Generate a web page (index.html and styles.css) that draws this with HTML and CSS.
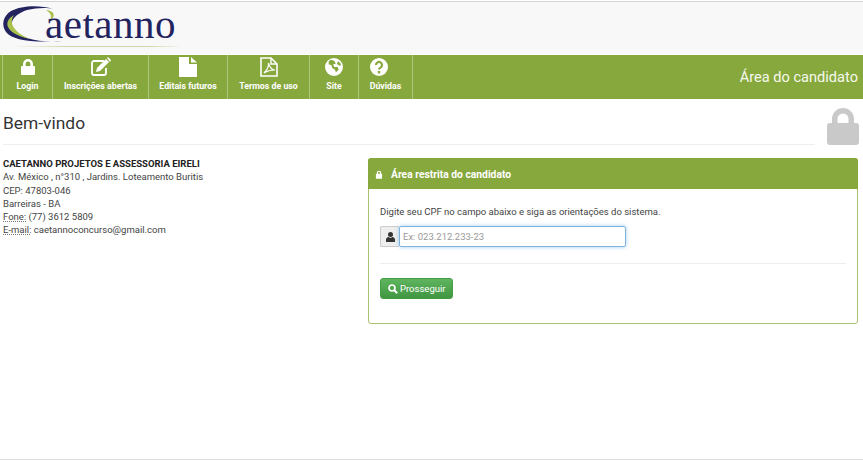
FILE: index.html
```html
<!DOCTYPE html>
<html lang="pt-BR">
<head>
  <meta charset="UTF-8">
  <title>Caetanno - Área do candidato</title>
  <link rel="stylesheet" href="styles.css">
</head>
<body>
  <header class="top">
    <div class="logo">
      <svg class="logo-c" width="64" height="40" viewBox="0 0 64 40">
        <path d="M52 4C40 0 21 0 10 6C2 11 0 20 5 27C11 35 30 38 61 36C40 38 20 34 13 25C7 17 14 9 26 5C35 3 45 2 52 4Z" fill="#23235f"/>
        <path d="M30 34C19 32 10 28 7 22C5 17 8 13 13 10C10 15 10 19 14 24C17 28 23 32 30 34Z" fill="#a9c04c"/>
        <path d="M45 5C54 6 55 11 49 16C51 11 50 8 45 5Z" fill="#a9c04c"/>
      </svg>
      <span class="logo-text">aetanno</span>
      <div class="logo-line"></div>
    </div>
  </header>

  <nav class="nav">
    <ul class="nav-list">
      <li class="nav-item w-login">
        <svg width="18" height="18" viewBox="0 0 18 18"><path d="M4 8V6a5 5 0 0 1 10 0v2h1a1 1 0 0 1 1 1v7a1 1 0 0 1-1 1H3a1 1 0 0 1-1-1V9a1 1 0 0 1 1-1Zm2.600 0h4.800V6a2.400 2.400 0 0 0-4.800 0Z" fill="#fff"/></svg>
        <span>Login</span>
      </li>
      <li class="nav-item w-insc">
        <svg width="22" height="18" viewBox="0 0 22 18"><path d="M14 3H4a2 2 0 0 0-2 2v10a2 2 0 0 0 2 2h10a2 2 0 0 0 2-2v-5" fill="none" stroke="#fff" stroke-width="1.800"/><path d="M7 10l9-9 3 3-9 9-4 1Z" fill="#fff"/><path d="M17 0l1-1 3 3-1 2Z" fill="#fff"/></svg>
        <span>Inscrições abertas</span>
      </li>
      <li class="nav-item w-edit">
        <svg width="18" height="20" viewBox="0 0 18 20"><path d="M0 0H10V7H18V20H0Z" fill="#fff"/><path d="M12 0L18 5.500H12Z" fill="#fff"/></svg>
        <span>Editais futuros</span>
      </li>
      <li class="nav-item w-term">
        <svg width="18" height="20" viewBox="0 0 18 20"><path d="M1 1H11L17 7V19H1Z" fill="none" stroke="#fff" stroke-width="1.600"/><path d="M11 1V7H17" fill="none" stroke="#fff" stroke-width="1.400"/><path d="M4 16C7 13 9 9 8.500 6C10 11 12 13 15 13C11 13 7 14 4 16Z" fill="none" stroke="#fff" stroke-width="1.200"/></svg>
        <span>Termos de uso</span>
      </li>
      <li class="nav-item w-site">
        <svg width="18" height="18" viewBox="0 0 18 18"><circle cx="9" cy="9" r="9" fill="#fff"/><path d="M5 2l4 1 2 3-3 1 1 3 4 0 1 3-3 3-1-3-3-2-1-3-3-1 0-3Z" fill="#86a83c" transform="translate(1 0) scale(.9)"/><path d="M13 3l3 3-1 2-3-2Z" fill="#86a83c"/></svg>
        <span>Site</span>
      </li>
      <li class="nav-item w-duv">
        <svg class="duv-icon" width="18" height="18" viewBox="0 0 18 18"><circle cx="9" cy="9" r="9" fill="#fff"/><path d="M6 7a3 3 0 1 1 4.500 2.600C9.500 10.200 9 10.700 9 11.500" fill="none" stroke="#86a83c" stroke-width="2.200"/><rect x="7.800" y="13" width="2.400" height="2.400" fill="#86a83c"/></svg>
        <span>Dúvidas</span>
      </li>
    </ul>
    <div class="nav-title">Área do candidato</div>
  </nav>

  <section class="page-head">
    <h1>Bem-vindo</h1>
    <svg class="big-lock" width="32" height="37" viewBox="0 0 32 37"><path d="M5 15V11a11 11 0 0 1 22 0v4h2a3 3 0 0 1 3 3v16a3 3 0 0 1-3 3H3a3 3 0 0 1-3-3V18a3 3 0 0 1 3-3Zm5.500 0h11V11a5.500 5.500 0 0 0-11 0Z" fill="#c9c9c9"/></svg>
  </section>

  <main class="content">
    <address class="contact">
      <strong>CAETANNO PROJETOS E ASSESSORIA EIRELI</strong><br>
      Av. México , n°310 , Jardins. Loteamento Buritis<br>
      CEP: 47803-046<br>
      Barreiras - BA<br>
      <abbr>Fone:</abbr> (77) 3612 5809<br>
      <abbr>E-mail:</abbr> caetannoconcurso@gmail.com
    </address>

    <div class="panel">
      <div class="panel-head">
        <svg width="8" height="9" viewBox="0 0 18 19"><path d="M4 8V6a5 5 0 0 1 10 0v2h1a1 1 0 0 1 1 1v9a1 1 0 0 1-1 1H3a1 1 0 0 1-1-1V9a1 1 0 0 1 1-1Zm2.600 0h4.800V6a2.400 2.400 0 0 0-4.800 0Z" fill="#fff"/></svg>
        <span>Área restrita do candidato</span>
      </div>
      <div class="panel-body">
        <p class="hint">Digite seu CPF no campo abaixo e siga as orientações do sistema.</p>
        <div class="input-group">
          <span class="addon">
            <svg width="9" height="10" viewBox="0 0 9 10"><circle cx="4.500" cy="2.600" r="2.500" fill="#333"/><path d="M0 10V7.500C0 6 1.500 5 2.500 5L4.500 6 6.500 5C7.500 5 9 6 9 7.500V10Z" fill="#333"/></svg>
          </span>
          <input class="cpf" type="text" placeholder="Ex: 023.212.233-23">
        </div>
        <hr class="sep">
        <button class="btn" type="button">
          <svg width="10" height="10" viewBox="0 0 10 10"><circle cx="4" cy="4" r="3" fill="none" stroke="#fff" stroke-width="1.700"/><path d="M6.300 6.300L9.200 9.200" stroke="#fff" stroke-width="2"/></svg>
          Prosseguir
        </button>
      </div>
    </div>
  </main>
</body>
</html>
```

FILE: styles.css
```css
html, body {
  height: 100%;
}

body {
  margin: 0;
  height: 460px;
  overflow: hidden;
  box-sizing: border-box;
  font-family: Roboto, 'Liberation Sans', sans-serif;
  font-size: 9.5px;
  color: #444;
  background: #fff;
  border-bottom: 1px solid #ddd;
}

/* Logo bar */
.top {
  height: 53px;
  margin-top: 1px;
  background: #f8f8f8;
  border-top: 1px solid #d4d4d4;
  box-sizing: border-box;
}

.logo {
  display: flex;
  align-items: flex-start;
  flex-wrap: wrap;
  width: 190px;
  height: 52px;
  padding-left: 1px;
}

.logo-c {
  margin-top: 3px;
}

.logo-text {
  margin: -2px 0 0 -20px;
  font-family: 'Liberation Serif', serif;
  font-size: 41px;
  letter-spacing: 0.5px;
  line-height: 48px;
  color: #23235f;
}

.logo-line {
  width: 171px;
  height: 1px;
  margin-left: 11px;
  margin-top: -5px;
  background: linear-gradient(90deg, #f8f8f8, #cfd8a8 30%, #cfd8a8 80%, #f8f8f8);
}

/* Green menu */
.nav {
  display: flex;
  justify-content: space-between;
  height: 44px;
  margin-top: 1px;
  background: #86a83c;
  color: #fff;
}

.nav-list {
  display: flex;
  margin: 0;
  padding: 0 0 0 2px;
  list-style: none;
}

.nav-item {
  display: flex;
  flex-direction: column;
  align-items: center;
  box-sizing: border-box;
  height: 44px;
  padding-top: 2px;
  border-left: 1px solid #b0c67c;
  font-size: 8.8px;
  font-weight: 700;
}

.nav-item:last-child {
  border-right: 1px solid #b0c67c;
}

.nav-item svg {
  height: 20px;
}

.nav-item span {
  margin-top: 4px;
}

.nav-item .duv-icon {
  margin-right: 14px;
}

.w-login { width: 50px; }
.w-insc { width: 96px; }
.w-edit { width: 79px; }
.w-term { width: 82px; }
.w-site { width: 49px; }
.w-duv { width: 55px; }

.nav-title {
  padding: 13px 5px 0 0;
  font-size: 14.6px;
  line-height: 19px;
  color: #f6f8ee;
}

/* Page heading */
.page-head {
  display: flex;
  justify-content: space-between;
  height: 46px;
  margin-left: 3px;
  padding-right: 4px;
}

.page-head h1 {
  flex: 1;
  height: 45px;
  margin: 0 12px 0 0;
  border-bottom: 1px solid #eee;
  font-size: 17.4px;
  font-weight: 400;
  line-height: 49px;
  color: #333;
}

.big-lock {
  margin-top: 9px;
}

/* Address and login panel */
.content {
  display: flex;
  align-items: flex-start;
  padding: 12px 5px 0 3px;
}

.contact {
  width: 365px;
  font-style: normal;
  line-height: 13.3px;
}

.contact strong {
  color: #222;
}

.contact abbr {
  text-decoration: underline dotted #777;
}

.panel {
  flex: 1;
  height: 166px;
  margin-top: 1px;
  box-sizing: border-box;
  border: 1px solid #a9c06f;
  border-radius: 3px;
}

.panel-head {
  display: flex;
  align-items: center;
  gap: 8px;
  box-sizing: border-box;
  height: 31px;
  margin: -1px -1px 0;
  padding: 1px 0 0 7px;
  border-radius: 3px 3px 0 0;
  background: #86a83c;
  color: #fff;
  font-size: 10.3px;
  font-weight: 700;
}

.panel-body {
  padding: 16px 11px 0;
}

.hint {
  margin: 0;
  line-height: 13px;
}

.input-group {
  display: flex;
  height: 21px;
  margin-top: 8px;
}

.addon {
  display: flex;
  align-items: center;
  justify-content: center;
  width: 19px;
  box-sizing: border-box;
  background: #eee;
  border: 1px solid #ccc;
  border-right: 0;
  border-radius: 2px 0 0 2px;
}

.cpf {
  width: 227px;
  box-sizing: border-box;
  padding: 0 3px;
  border: 1px solid #7fb3dc;
  border-radius: 2px;
  box-shadow: 0 0 4px rgba(102, 175, 233, .6);
  font-family: inherit;
  font-size: 9.5px;
  outline: none;
}

.cpf::placeholder {
  color: #999;
}

.sep {
  height: 1px;
  margin: 16px 0 14px;
  border: 0;
  background: #eee;
}

.btn {
  display: flex;
  align-items: center;
  gap: 2px;
  height: 21px;
  padding: 0 7px 0 7px;
  border: 1px solid #449d44;
  border-radius: 3px;
  background: linear-gradient(#5fb55f, #419641);
  color: #fff;
  font-family: inherit;
  font-size: 9.5px;
}
```
